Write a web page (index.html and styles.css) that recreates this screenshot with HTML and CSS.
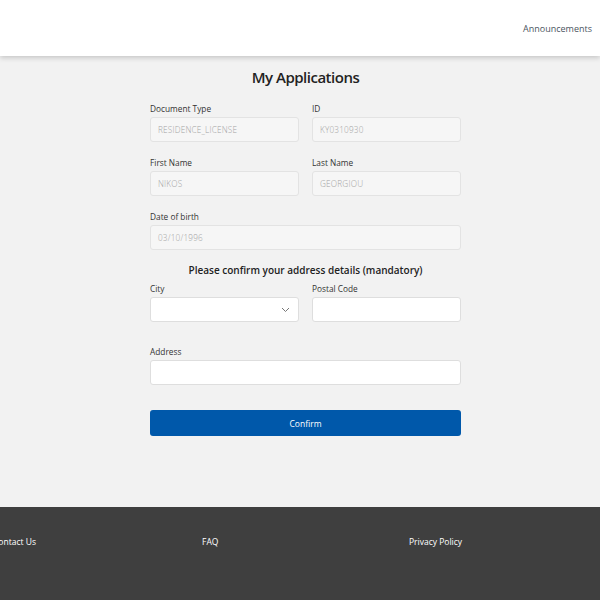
FILE: index.html
```html
<!DOCTYPE html>
<html>
<head>
<meta charset="utf-8">
<link rel="stylesheet" href="styles.css">
</head>
<body>
<header class="topbar">
  <nav class="topnav"><a class="navlink">Announcements</a></nav>
</header>
<main class="content">
  <h1 class="title">My Applications</h1>
  <form class="form">
    <div class="row">
      <div class="field">
        <label class="label">Document Type</label>
        <div class="input disabled">RESIDENCE_LICENSE</div>
      </div>
      <div class="field">
        <label class="label">ID</label>
        <div class="input disabled">KY0310930</div>
      </div>
    </div>
    <div class="row">
      <div class="field">
        <label class="label">First Name</label>
        <div class="input disabled">NIKOS</div>
      </div>
      <div class="field">
        <label class="label">Last Name</label>
        <div class="input disabled">GEORGIOU</div>
      </div>
    </div>
    <div class="row single">
      <div class="field">
        <label class="label">Date of birth</label>
        <div class="input disabled">03/10/1996</div>
      </div>
    </div>
    <h2 class="subtitle">Please confirm your address details (mandatory)</h2>
    <div class="row tight">
      <div class="field">
        <label class="label">City</label>
        <div class="input select">
          <svg class="chev" width="9" height="6" viewBox="0 0 9 6"><path d="M1 1 L4.5 4.5 L8 1" fill="none" stroke="#777" stroke-width="1"/></svg>
        </div>
      </div>
      <div class="field">
        <label class="label">Postal Code</label>
        <div class="input"></div>
      </div>
    </div>
    <div class="row single address">
      <div class="field">
        <label class="label">Address</label>
        <div class="input"></div>
      </div>
    </div>
    <button type="button" class="btn">Confirm</button>
  </form>
</main>
<footer class="footer">
  <div class="footlinks">
    <a class="footlink">Contact Us</a>
    <a class="footlink">FAQ</a>
    <a class="footlink">Privacy Policy</a>
  </div>
</footer>
</body>
</html>
```
FILE: styles.css
```css
html, body {
  margin: 0;
  padding: 0;
}
body {
  background: #f2f2f2;
  font-family: "Open Sans", "Liberation Sans", sans-serif;
  color: #333;
  width: 600px;
  overflow: hidden;
}
.topbar {
  height: 56px;
  background: #fff;
  box-shadow: 0 2px 5px rgba(0,0,0,0.18);
  display: flex;
  justify-content: flex-end;
  align-items: center;
  position: relative;
  z-index: 1;
}
.topnav {
  padding-right: 8px;
  padding-bottom: 4px;
}
.navlink {
  font-size: 9px;
  color: #4a5560;
}
.content {
  height: 451px;
  display: flex;
  flex-direction: column;
  align-items: center;
  padding-left: 11px;
}
.title {
  margin: 11px 0 0;
  font-size: 15px;
  font-weight: 600;
  color: #222;
  letter-spacing: -0.5px;
  line-height: 20px;
}
.form {
  width: 311px;
  margin-top: 16px;
  display: flex;
  flex-direction: column;
}
.row {
  display: grid;
  grid-template-columns: 149px 149px;
  column-gap: 13px;
  margin-bottom: 15px;
}
.row.single {
  grid-template-columns: 311px;
  margin-bottom: 12px;
}
.field {
  display: flex;
  flex-direction: column;
}
.label {
  font-size: 8.3px;
  line-height: 12px;
  color: #333;
  margin-bottom: 2px;
}
.input {
  height: 23px;
  border: 1px solid #dedede;
  border-radius: 3px;
  background: #fff;
  box-sizing: content-box;
  display: flex;
  align-items: center;
  padding: 0 7px;
  font-size: 8.2px;
  font-weight: 300;
  color: #a3a3a3;
  letter-spacing: 0.2px;
}
.input.disabled {
  background: #f6f6f6;
  border-color: #e3e3e3;
}
.input.select {
  justify-content: flex-end;
  padding-right: 8px;
}
.subtitle {
  margin: 1px 0 6px;
  text-align: center;
  font-size: 10px;
  font-weight: 600;
  color: #222;
  line-height: 14px;
}
.row.tight {
  margin-bottom: 24px;
}
.row.address {
  margin-bottom: 25px;
}
.btn {
  height: 26px;
  border: none;
  border-radius: 3px;
  background: #0058aa;
  color: #fff;
  font-family: "Open Sans", "Liberation Sans", sans-serif;
  font-size: 8.5px;
  padding: 0;
}
.footer {
  height: 93px;
  background: #3f3f3f;
}
.footlinks {
  display: grid;
  grid-template-columns: 209px 207px 207px;
  margin-left: -7px;
  padding-top: 29px;
}
.footlink {
  font-size: 8.5px;
  color: #fff;
  line-height: 12px;
}
```
